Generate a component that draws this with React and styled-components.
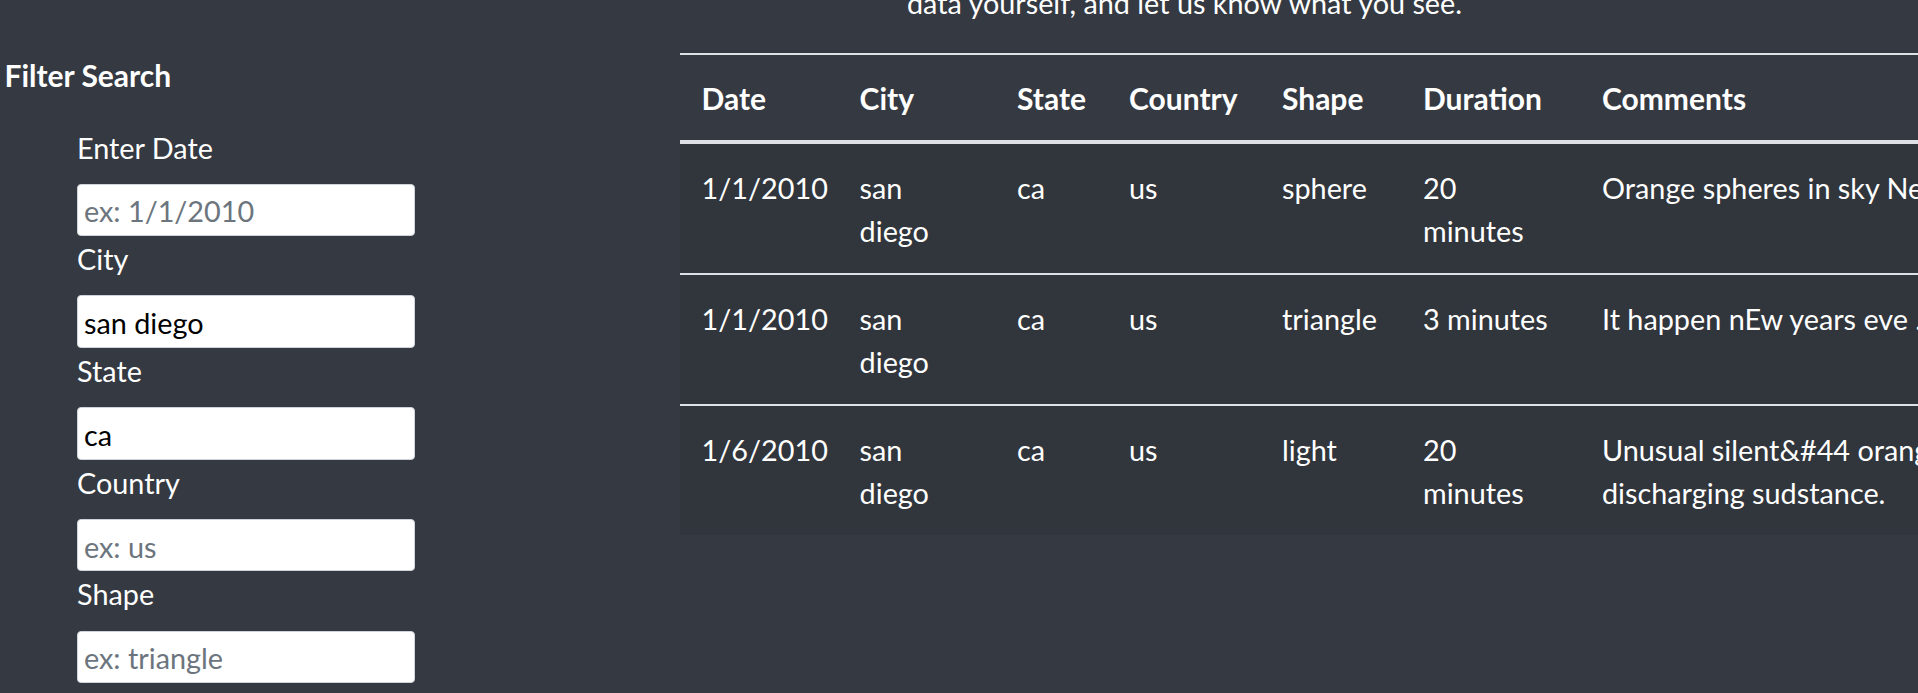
import React from "react";
import styled, { createGlobalStyle } from "styled-components";

const GlobalStyle = createGlobalStyle`
  html, body {
    margin: 0;
    padding: 0;
    background: #353941;
    overflow: hidden;
  }
  body {
    font-family: Lato, "Liberation Sans", sans-serif;
    font-size: 28.8px;
    line-height: 43.2px;
    color: #fff;
  }
`;

const Page = styled.div`
  display: flex;
  align-items: flex-start;
  width: 1918px;
  height: 693px;
  overflow: hidden;
`;

const Sidebar = styled.aside`
  flex: 0 0 680px;
  box-sizing: border-box;
  padding: 53.5px 0 0 4.5px;
`;

const Title = styled.h6`
  margin: 0 0 29.8px;
  font-size: 30px;
  font-weight: 700;
  line-height: 43.2px;
`;

const Form = styled.form`
  display: flex;
  flex-direction: column;
  width: 338px;
  padding-left: 72.5px;
`;

const Label = styled.label`
  display: block;
  margin: ${(p) => (p.first ? "0" : "2px")} 0 14px;
  line-height: 43.2px;
`;

const Input = styled.input`
  box-sizing: border-box;
  width: 338px;
  height: 52.5px;
  padding: 3px 6px 0;
  border: 1px solid #ced4da;
  border-radius: 4px;
  background: #fff;
  font: inherit;
  color: #000;
  outline: none;

  &::placeholder {
    color: #6c757d;
  }
`;

const Main = styled.main`
  flex: 0 0 1009px;
  min-width: 0;
`;

const Intro = styled.p`
  margin: -18.2px 0 27.6px;
  text-align: center;
  line-height: 43.2px;
`;

const Table = styled.table`
  width: 1700px;
  table-layout: fixed;
  border-collapse: collapse;
  color: #fff;
`;

const Col = styled.col`
  width: ${(p) => p.w}px;
`;

const Th = styled.th`
  padding: 22.5px 21.6px 20.1px;
  border-top: 2px solid #dee2e6;
  border-bottom: 4px solid #dee2e6;
  text-align: left;
  vertical-align: bottom;
  font-size: 30px;
  font-weight: 700;
  line-height: 43.2px;
`;

const Row = styled.tr`
  background: #31353c;
`;

const Td = styled.td`
  padding: 22.5px 21.6px 20.1px;
  border-top: 2px solid #dee2e6;
  vertical-align: top;
  line-height: 43.2px;
  white-space: pre-line;
`;

const filters = [
  { label: "Enter Date", placeholder: "ex: 1/1/2010", value: "" },
  { label: "City", placeholder: "ex: benton", value: "san diego" },
  { label: "State", placeholder: "ex: ar", value: "ca" },
  { label: "Country", placeholder: "ex: us", value: "" },
  { label: "Shape", placeholder: "ex: triangle", value: "" },
];

const columns = [
  { name: "Date", w: 158 },
  { name: "City", w: 157.4 },
  { name: "State", w: 112 },
  { name: "Country", w: 153 },
  { name: "Shape", w: 141 },
  { name: "Duration", w: 179 },
  { name: "Comments", w: 799.6 },
];

const sightings = [
  ["1/1/2010", "san diego", "ca", "us", "sphere", "20 minutes", "Orange spheres in sky New Years Eve."],
  ["1/1/2010", "san diego", "ca", "us", "triangle", "3 minutes", "It happen nEw years eve . UFO seen."],
  ["1/6/2010", "san diego", "ca", "us", "light", "20 minutes", "Unusual silent&#44 orange lights over the bay\ndischarging sudstance."],
];

export default function App() {
  return (
    <>
      <GlobalStyle />
      <Page>
        <Sidebar>
          <Title>Filter Search</Title>
          <Form>
            {filters.map((f, i) => (
              <React.Fragment key={f.label}>
                <Label first={i === 0 ? 1 : 0}>{f.label}</Label>
                <Input placeholder={f.placeholder} defaultValue={f.value} />
              </React.Fragment>
            ))}
          </Form>
        </Sidebar>
        <Main>
          <Intro>data yourself, and let us know what you see.</Intro>
          <Table>
            <colgroup>
              {columns.map((c) => (
                <Col key={c.name} w={c.w} />
              ))}
            </colgroup>
            <thead>
              <tr>
                {columns.map((c) => (
                  <Th key={c.name}>{c.name}</Th>
                ))}
              </tr>
            </thead>
            <tbody>
              {sightings.map((row, i) => (
                <Row key={i}>
                  {row.map((cell, j) => (
                    <Td key={j}>{cell}</Td>
                  ))}
                </Row>
              ))}
            </tbody>
          </Table>
        </Main>
      </Page>
    </>
  );
}
